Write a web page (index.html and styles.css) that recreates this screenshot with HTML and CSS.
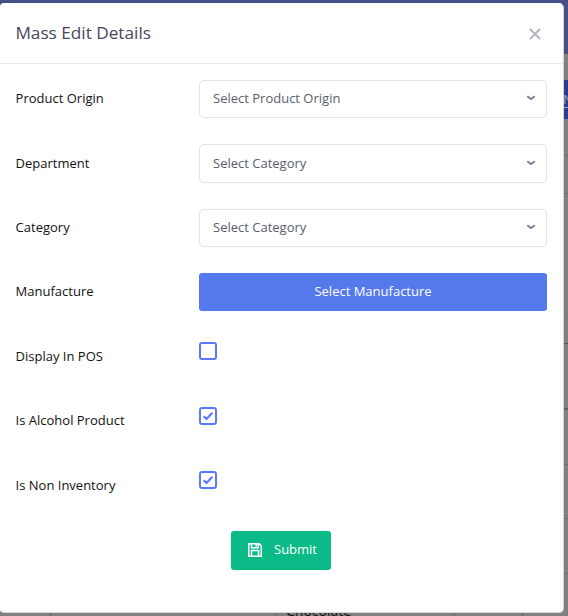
FILE: index.html
```html
<!DOCTYPE html>
<html lang="en">
<head>
<meta charset="utf-8">
<title>Mass Edit Details</title>
<link rel="stylesheet" href="styles.css">
</head>
<body>
<div class="page">
  <div class="topbar"></div>
  <div class="toolbar"><span class="new-btn">N</span></div>
  <div class="line l1"></div><div class="line l2"></div><div class="line l3"></div><div class="line l4"></div>
  <div class="line l5"></div><div class="line l6"></div><div class="line l7"></div><div class="line l8"></div>
  <div class="table-row"><span></span><span></span><span class="name">Chocolate</span><span></span><span></span></div>
</div>
<main class="modal">
  <header class="modal-header">
    <h1>Mass Edit Details</h1>
    <svg class="close" viewBox="0 0 12 12"><path d="M1 1l10 10M11 1L1 11"/></svg>
  </header>
  <form class="form">
    <div class="row"><label>Product Origin</label><div class="select">Select Product Origin<svg viewBox="0 0 10 6"><path d="M1.3 1.2L5 4.2l3.7-3"/></svg></div></div>
    <div class="row"><label>Department</label><div class="select">Select Category<svg viewBox="0 0 10 6"><path d="M1.3 1.2L5 4.2l3.7-3"/></svg></div></div>
    <div class="row"><label>Category</label><div class="select">Select Category<svg viewBox="0 0 10 6"><path d="M1.3 1.2L5 4.2l3.7-3"/></svg></div></div>
    <div class="row"><label>Manufacture</label><div class="primary">Select Manufacture</div></div>
    <div class="row"><label>Display In POS</label><div class="check"></div></div>
    <div class="row"><label>Is Alcohol Product</label><div class="check"><svg viewBox="0 0 14 14"><path d="M2.7 7.2l2.8 2.8 5.9-6.2"/></svg></div></div>
    <div class="row"><label>Is Non Inventory</label><div class="check"><svg viewBox="0 0 14 14"><path d="M2.7 7.2l2.8 2.8 5.9-6.2"/></svg></div></div>
    <div class="submit"><svg viewBox="0 0 14 14"><path d="M.8.8h10.4l2 2v10.4H.8zM3.5.8v4h6.7v-4M3.5 13.2V7.6h7v5.6M8.2 1.5v2.1"/></svg><span>Submit</span></div>
  </form>
</main>
</body>
</html>
```
FILE: styles.css
```css
* { box-sizing: border-box; }
body {
  margin: 0;
  width: 568px;
  height: 616px;
  overflow: hidden;
  font: 13px/20px "Open Sans", sans-serif;
  color: #111;
}
.page {
  position: absolute;
  inset: 0;
  overflow: hidden;
  background: #808080;
}
.topbar { height: 54px; background: #434f85; }
.toolbar { height: 65px; padding-top: 26px; display: flex; justify-content: flex-end; }
.new-btn {
  width: 18px;
  height: 39px;
  padding-left: 13px;
  line-height: 39px;
  background: #2c3e88;
  color: #9aa3c0;
  text-decoration: underline;
  text-underline-offset: 3px;
  overflow: hidden;
}
.line { position: absolute; left: 0; right: 0; height: 1px; background: #6c6c6c; }
.l1 { top: 155px; }
.l2 { top: 193px; }
.l3 { top: 312px; background: #777; }
.l4 { top: 343px; background: #585858; }
.l5 { top: 408px; height: 2px; background: #606060; }
.l6 { top: 464px; }
.l7 { top: 518px; }
.l8 { top: 573px; }
.table-row {
  position: absolute;
  top: 601px;
  left: 0;
  display: grid;
  grid-template-columns: 51px 225px 179px 68px 60px;
  height: 30px;
  color: #151515;
}
.table-row span { border-right: 1px solid #686868; }
.table-row .name { padding-left: 10px; font-size: 14px; }
.modal {
  position: relative;
  width: 565px;
  height: 610px;
  margin: 3px 0 0 -1px;
  background: #fff;
  border: 1px solid #d5d6d9;
  border-top-color: #fff;
  border-radius: 5px;
}
.modal-header {
  height: 60px;
  padding: 0 22px 0 15.4px;
  display: flex;
  align-items: center;
  justify-content: space-between;
  border-bottom: 1px solid #ebedf2;
}
h1 { margin: -2px 0 0; font-size: 17.2px; font-weight: 400; color: #48465b; }
svg { fill: none; }
.close { width: 12px; height: 12px; stroke: #b0b2bf; stroke-width: 1.8; }
.form { padding: 16px 16px 0 15px; }
.row {
  display: grid;
  grid-template-columns: 184px 348px;
  height: 64.4px;
  align-items: start;
}
label { padding: 8.2px 0 0 .6px; }
.select {
  height: 38.4px;
  padding: 0 10px 2px 13px;
  display: flex;
  align-items: center;
  justify-content: space-between;
  border: 1px solid #e2e2ec;
  border-radius: 5px;
  color: #595d6e;
}
.select svg { width: 10px; height: 6px; stroke: #74788d; stroke-width: 1.8; }
.primary {
  height: 38px;
  line-height: 37px;
  text-align: center;
  background: #5578eb;
  color: #fff;
  border-radius: 3px;
}
.check { width: 18px; height: 18px; margin-top: 4.7px; border: 2px solid #5d78ff; border-radius: 3px; }
.check svg { display: block; width: 14px; height: 14px; stroke: #5d78ff; stroke-width: 2.2; }
.submit {
  width: 100px;
  height: 39px;
  margin-left: 216px;
  padding-left: 17px;
  display: flex;
  align-items: center;
  gap: 12px;
  background: #0abb87;
  color: #fff;
  border-radius: 3px;
}
.submit span { margin-top: -2px; }
.submit svg { width: 14px; height: 14px; stroke: #fff; stroke-width: 1.5; }
```
